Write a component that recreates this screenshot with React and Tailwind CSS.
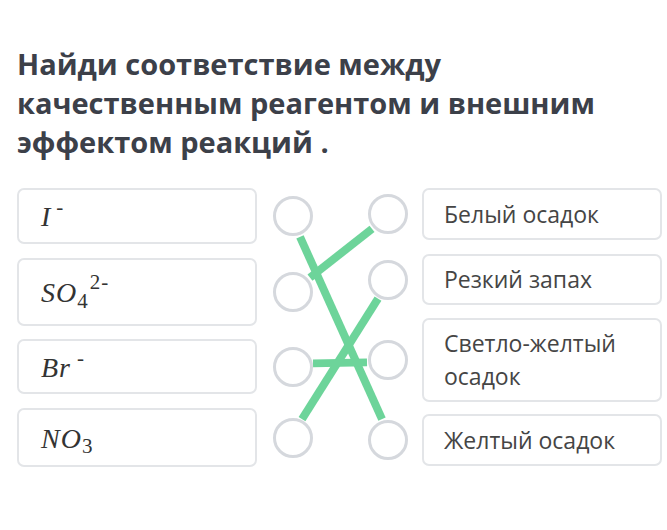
import React from 'react';

const leftItems = [
  { h: 'h-[56px]', mt: '', content: <span>I<sup className="not-italic text-[21px] ml-[5px] relative -top-[12px]">-</sup></span> },
  { h: 'h-[68px]', mt: 'mt-[14px]', content: <span>SO<sub className="not-italic text-[21px] relative top-[6px]">4</sub><sup className="not-italic text-[21px] ml-[1px] relative -top-[13px]">2-</sup></span> },
  { h: 'h-[55px]', mt: 'mt-[13px]', content: <span>Br<sup className="not-italic text-[21px] ml-[6px] relative -top-[12px]">-</sup></span> },
  { h: 'h-[59px]', mt: 'mt-[14px]', content: <span>NO<sub className="not-italic text-[21px] relative top-[5px]">3</sub></span> },
];

const rightItems = [
  { h: 'h-[52px]', mt: '', text: 'Белый осадок' },
  { h: 'h-[51px]', mt: 'mt-[14px]', text: 'Резкий запах' },
  { h: 'h-[84px]', mt: 'mt-[13px]', text: 'Светло-желтый осадок' },
  { h: 'h-[52px]', mt: 'mt-[12px]', text: 'Желтый осадок' },
];

const Circle = () => (
  <div className="relative z-10 w-[40px] h-[40px] rounded-full border-[3px] border-[#d5d8dd] bg-white shrink-0" />
);

export default function App() {
  return (
    <div className="min-h-screen bg-white" style={{ fontFamily: '"Open Sans", sans-serif' }}>
      <h1 className="pt-[44px] pl-[17px] pr-[30px] text-[29px] leading-[39px] font-bold text-[#3c4049]">
        Найди соответствие между качественным реагентом и внешним эффектом реакций .
      </h1>

      <div className="relative flex mt-[27px] pl-[17px]">
        {/* connections */}
        <svg className="absolute left-0 top-0 w-full h-full" viewBox="0 0 667 280" preserveAspectRatio="none" width="667" height="280">
          <g stroke="#6dd49a" strokeWidth="8" strokeLinecap="butt">
            <line x1="300" y1="49" x2="382" y2="232" />
            <line x1="372" y1="41" x2="310" y2="90" />
            <line x1="378" y1="111" x2="302" y2="232" />
            <line x1="313" y1="176" x2="367" y2="175" />
          </g>
        </svg>

        <div className="flex flex-col w-[296px]">
          {leftItems.map((item, i) => (
            <div key={i} className={`flex items-center justify-between ${item.mt}`}>
              <div
                className={`w-[240px] ${item.h} flex items-center pl-[22px] pt-[2px] border-2 border-[#e3e5e8] rounded-[7px] bg-white italic text-[28px] tracking-[1px] text-[#333]`}
                style={{ fontFamily: '"Liberation Serif", serif' }}
              >
                {item.content}
              </div>
              <Circle />
            </div>
          ))}
        </div>

        <div className="flex flex-col ml-[55px]">
          {rightItems.map((item, i) => (
            <div key={i} className={`flex items-center gap-[14px] ${item.mt}`}>
              <Circle />
              <div className={`w-[240px] ${item.h} flex items-center pl-[20px] pr-[10px] border-2 border-[#e3e5e8] rounded-[7px] bg-white text-[23px] leading-[33px] text-[#454545]`}>
                {item.text}
              </div>
            </div>
          ))}
        </div>
      </div>
    </div>
  );
}
